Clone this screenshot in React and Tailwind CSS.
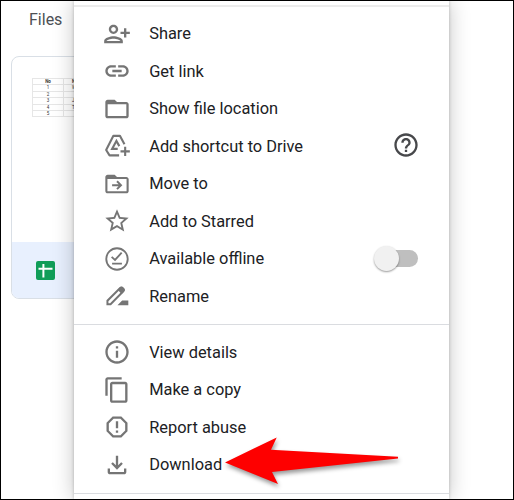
import React from 'react';
import {
  MdOutlinePersonAddAlt1,
  MdOutlineLink,
  MdFolderOpen,
  MdStarBorder,
  MdOutlineInfo,
  MdContentCopy,
  MdReportGmailerrorred,
  MdOutlineFileDownload,
  MdHelpOutline,
} from 'react-icons/md';

function AddShortcutIcon({ className }) {
  return (
    <svg viewBox="0 0 24 24" className={className} fill="none" stroke="currentColor" strokeWidth="1.8">
      <path d="M18.4 10.6 14.5 3.3H8.9L2.7 15.4l2.9 4.6h8.2" strokeLinejoin="round" />
      <path d="M14 12.1 11.5 7.7 7.8 14.5h4.8" />
      <path d="M19 12.6v8M15 16.6h8" />
    </svg>
  );
}

function MoveIcon({ className }) {
  return (
    <svg viewBox="0 0 24 24" className={className} fill="currentColor">
      <path d="M20 6h-8l-2-2H4c-1.1 0-2 .9-2 2v12c0 1.1.9 2 2 2h16c1.1 0 2-.9 2-2V8c0-1.1-.9-2-2-2zm.2 12.2H3.8V7.8h16.4v10.4z" />
      <path d="M7.8 13h7.4M12 9.6l3.4 3.4-3.4 3.4" fill="none" stroke="currentColor" strokeWidth="1.7" />
    </svg>
  );
}

function OfflineIcon({ className }) {
  return (
    <svg viewBox="0 0 24 24" className={className} fill="none" stroke="currentColor" strokeWidth="1.6">
      <circle cx="12" cy="12" r="9.2" />
      <path d="M7.4 10.2l2.9 2.6 5.7-6.2M7.8 16h8.4" />
    </svg>
  );
}

function RenameIcon({ className }) {
  return (
    <svg viewBox="0 0 24 24" className={className} fill="currentColor">
      <path
        d="M3.8 19v-2.9L14.7 5.2c.6-.6 1.3-.6 1.9 0l.8.8c.6.6.6 1.3 0 1.9L6.5 19z"
        fill="none"
        stroke="currentColor"
        strokeWidth="1.7"
      />
      <path d="M12.6 6.7 15.2 4h1.6L18.6 6v1.6l-2.7 2.6zM12.4 19.9l4-4h5.3v4z" />
    </svg>
  );
}

const fileActions = [
  { label: 'Share', icon: MdOutlinePersonAddAlt1 },
  { label: 'Get link', icon: MdOutlineLink },
  { label: 'Show file location', icon: MdFolderOpen },
  { label: 'Add shortcut to Drive', icon: AddShortcutIcon, help: true },
  { label: 'Move to', icon: MoveIcon },
  { label: 'Add to Starred', icon: MdStarBorder },
  { label: 'Available offline', icon: OfflineIcon, toggle: true },
  { label: 'Rename', icon: RenameIcon },
];

const moreActions = [
  { label: 'View details', icon: MdOutlineInfo },
  { label: 'Make a copy', icon: MdContentCopy },
  { label: 'Report abuse', icon: MdReportGmailerrorred },
  { label: 'Download', icon: MdOutlineFileDownload },
];

const previewRows = [
  ['No', 'Name'],
  ['1', 'William'],
  ['2', ''],
  ['3', 'John'],
  ['4', 'Tom'],
  ['5', ''],
];

function Toggle() {
  return (
    <span className="relative h-[17px] w-[39px] rounded-full bg-[#bfbfbf]">
      <span className="absolute -left-[5px] -top-1 size-[25px] rounded-full bg-[#f1f1f1] shadow-[0_1px_2px_rgba(0,0,0,0.4)]" />
    </span>
  );
}

function MenuItem({ item }) {
  const Icon = item.icon;
  return (
    <li className="flex h-[37.5px] items-center pl-[28.5px] pr-[31px]">
      <Icon className="size-7 shrink-0 text-[#757575]" />
      <span className="ml-[18.7px] flex-1 whitespace-nowrap pt-[2px]">{item.label}</span>
      {item.help && <MdHelpOutline className="-mr-[2px] mb-[2px] size-7 text-[#47484b]" />}
      {item.toggle && <Toggle />}
    </li>
  );
}

function ContextMenu() {
  return (
    <div className="relative z-10 w-[375px] shrink-0 bg-white pt-1 text-[16.4px] text-[#202124] shadow-[0_0_3px_rgba(0,0,0,0.22),0_0_20px_rgba(0,0,0,0.24)]">
      <hr className="border-t-2 border-[#ececec]" />
      <ul className="pt-2">
        {fileActions.map((item) => (
          <MenuItem key={item.label} item={item} />
        ))}
      </ul>
      <hr className="mt-[9px] border-[#dadce0]" />
      <ul className="pt-[8.5px]">
        {moreActions.map((item) => (
          <MenuItem key={item.label} item={item} />
        ))}
      </ul>
      <hr className="mt-[9px] border-[#dadce0]" />
      <RedArrow />
    </div>
  );
}

function SheetsIcon() {
  return (
    <svg viewBox="0 0 19 19" className="size-[19px]">
      <rect width="19" height="19" rx="2" fill="#109d58" />
      <path d="M7.4 3v13.5M2.5 7.8h14" stroke="#fff" strokeWidth="2" fill="none" />
    </svg>
  );
}

function FileCard() {
  return (
    <div className="ml-[10px] flex h-[243px] w-[180px] flex-col overflow-hidden rounded-lg border border-[#d9dfe6]">
      <div className="flex-1 pl-5 pt-[21px]">
        <div className="w-[70px] border-l border-t border-[#e6e6e6] text-[4.5px] leading-[6px] text-[#333]">
          {previewRows.map(([no, name], i) => (
            <div
              key={no}
              className={i === 0 ? 'flex h-[6.4px] font-bold' : 'flex h-[6.4px]'}
            >
              <span className="w-[31px] border-b border-r border-[#e6e6e6] text-center">{no}</span>
              <span className="flex-1 border-b border-[#e6e6e6] pl-2">{name}</span>
            </div>
          ))}
        </div>
      </div>
      <div className="flex h-[56px] items-center bg-[#e8f0fe] pl-6">
        <SheetsIcon />
      </div>
    </div>
  );
}

function RedArrow() {
  return (
    <svg
      viewBox="0 0 180 54"
      className="absolute left-[147.5px] top-[433px] h-[54px] w-[180px] overflow-visible drop-shadow-[1px_3px_2px_rgba(0,0,0,0.4)]"
    >
      <path d="M3 28.5 54.7 3.5l-5.7 12.2L176 22.7v1.8L50 38l6 12z" fill="#fe0000" />
    </svg>
  );
}

export default function App() {
  return (
    <div className="flex h-[500px] w-[514px] overflow-hidden border border-black bg-white font-['Roboto',sans-serif]">
      <div className="w-[73px] shrink-0">
        <h2 className="h-[55px] pl-[28px] pt-[7px] text-[16px] leading-6 text-[#4d5055]">
          Files
        </h2>
        <FileCard />
      </div>
      <ContextMenu />
    </div>
  );
}
